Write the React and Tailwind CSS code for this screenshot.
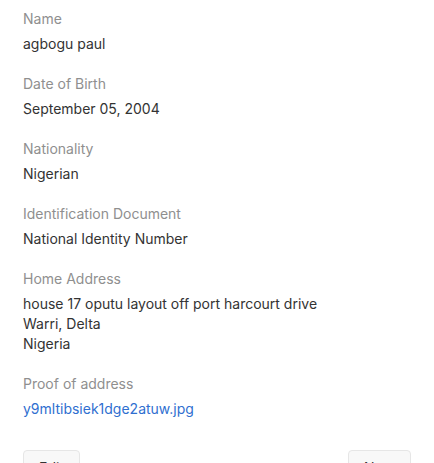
import React from 'react'

const fields = [
  { label: 'Name', value: ['agbogu paul'] },
  { label: 'Date of Birth', value: ['September 05, 2004'] },
  { label: 'Nationality', value: ['Nigerian'] },
  { label: 'Identification Document', value: ['National Identity Number'] },
  {
    label: 'Home Address',
    value: ['house 17 oputu layout off port harcourt drive', 'Warri, Delta', 'Nigeria'],
  },
]

export default function App() {
  return (
    <div className="min-h-[463px] bg-white px-[23px] pt-[9px] font-['Inter',sans-serif] text-[14px] leading-[20px]">
      <div className="flex flex-col gap-5">
        {fields.map((f) => (
          <div key={f.label}>
            <div className="mb-[5px] text-[#8f8f8f]">{f.label}</div>
            {f.value.map((line) => (
              <div key={line} className="text-[#333333]">
                {line}
              </div>
            ))}
          </div>
        ))}
        <div>
          <div className="mb-[5px] text-[#8f8f8f]">Proof of address</div>
          <a href="#" className="text-[#2f6fd0]">
            y9mltibsiek1dge2atuw.jpg
          </a>
        </div>
      </div>

      {/* Actions */}
      <div className="mt-[31px] flex justify-between">
        <button className="h-9 w-[57px] rounded border border-[#e6e6e6] bg-[#f8f8f8] text-[#333333]">
          Edit
        </button>
        <button className="h-9 w-[63px] rounded border border-[#e6e6e6] bg-[#f8f8f8] text-[#333333]">
          Next
        </button>
      </div>
    </div>
  )
}
